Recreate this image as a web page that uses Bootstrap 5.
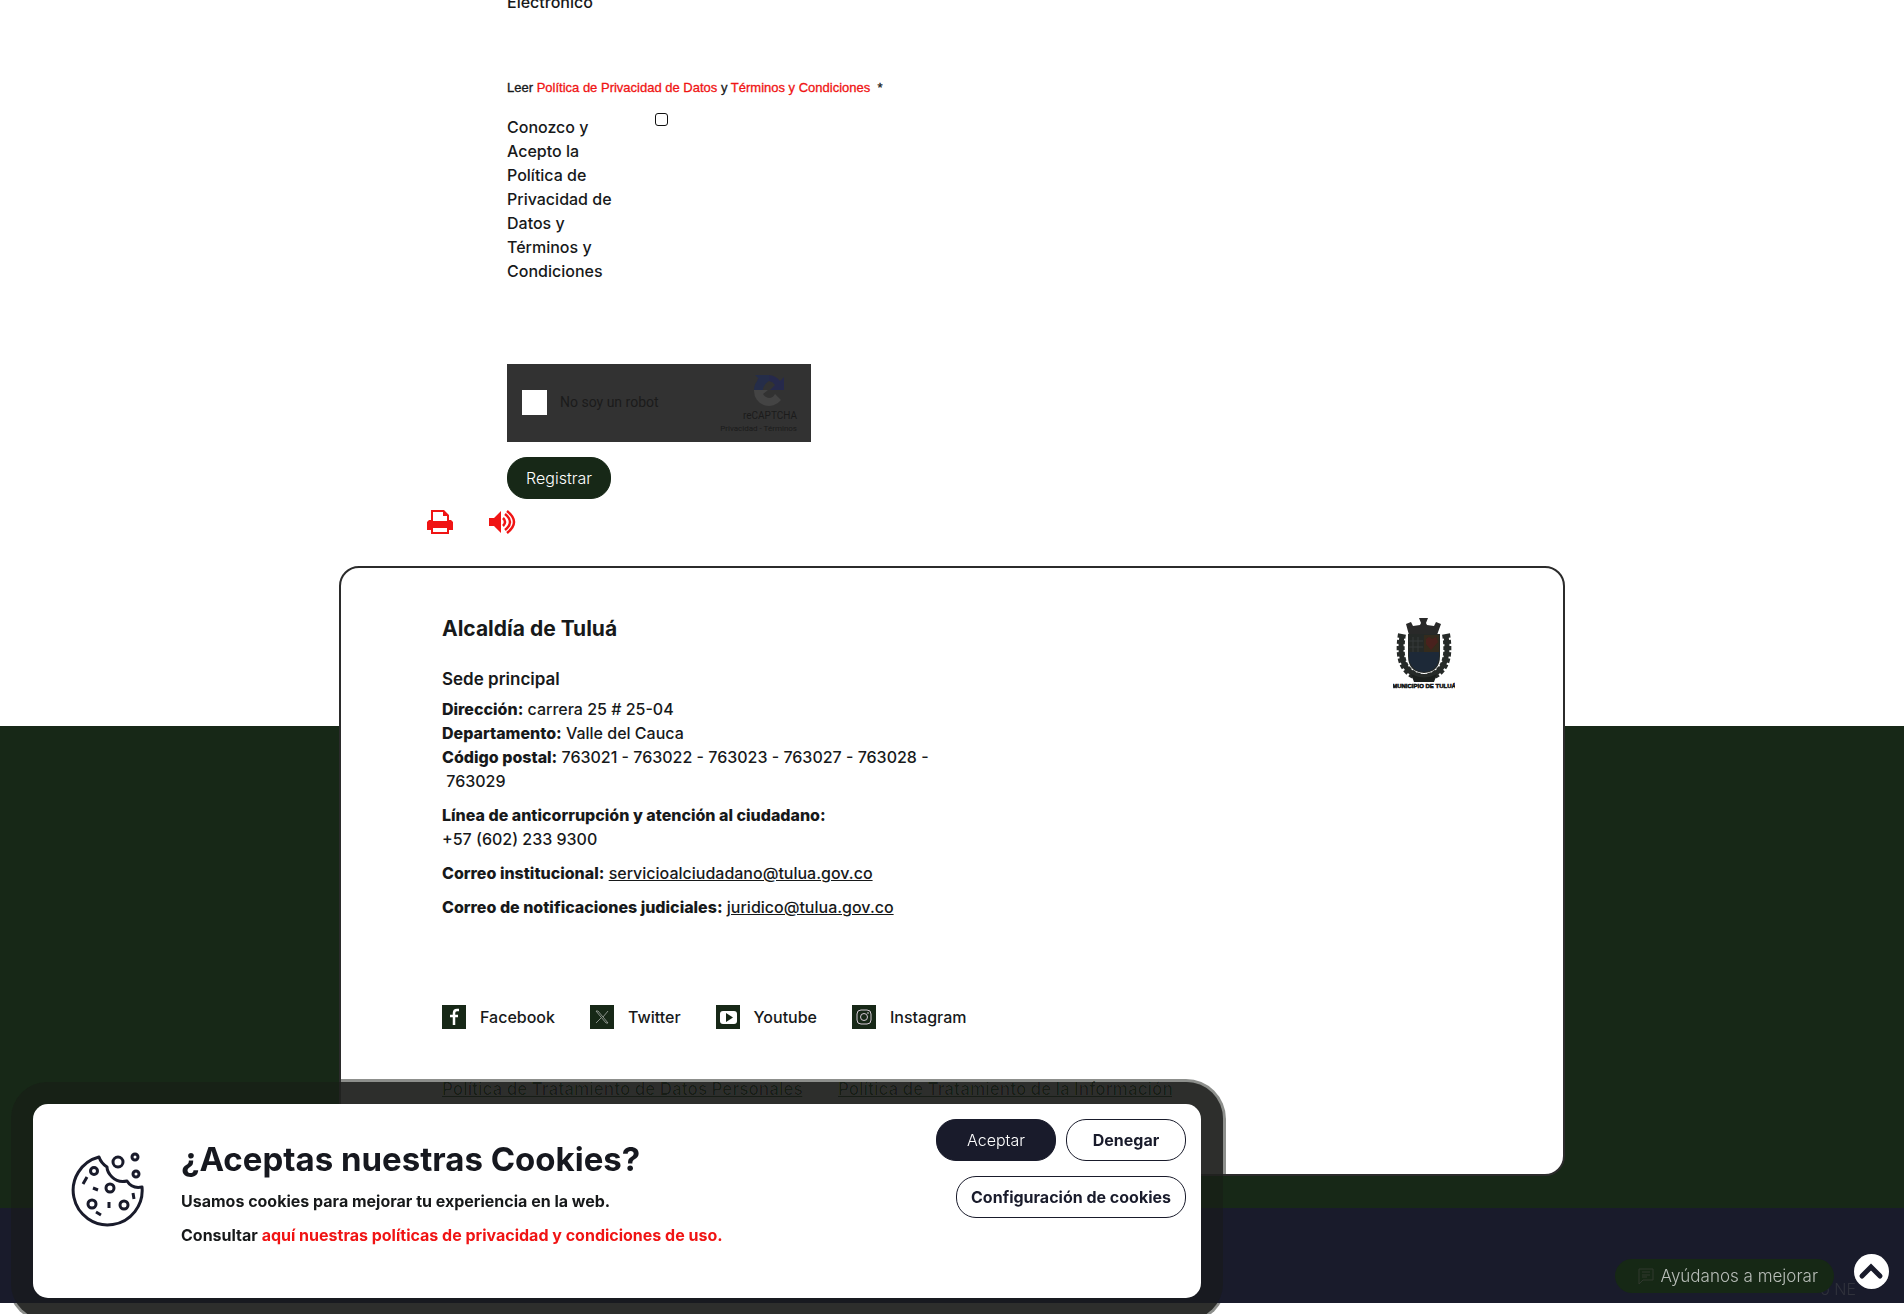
<!DOCTYPE html>
<html lang="es">
<head>
<meta charset="utf-8">
<meta name="viewport" content="width=device-width, initial-scale=1">
<title>Alcaldía de Tuluá</title>
<link href="https://cdn.jsdelivr.net/npm/bootstrap@5.3.0/dist/css/bootstrap.min.css" rel="stylesheet">
<style>
:root { --green:#172817; --navy:#191b2b; --ink:#17191a; --alert:#f01414; }
body { font-family:Inter,"Liberation Sans",sans-serif; font-size:16px; line-height:24px; color:var(--ink); background:#fff; overflow-x:hidden; font-weight:500; }
.wrap { width:100%; max-width:1226px; margin:0 auto; }
.form-zone { padding-left:168px; overflow:hidden; }
.field-label { width:148px; padding-right:32px; }
.first-label { margin-top:-10px; }
.legal { font-family:"Liberation Sans",sans-serif; font-size:13px; line-height:20px; margin-top:64px; -webkit-text-stroke:.3px; }
.legal a, .cookie-box a { color:var(--alert); text-decoration:none; }
.accept-row { margin-top:17px; min-height:249px; }
.accept-row input { appearance:none; width:13px; height:13px; margin:-2px 0 0; border:1px solid #111; border-radius:3px; background:#fff; }
.accept-row input:checked { background:#111; }
.captcha { width:304px; height:78px; background:#323232; font-family:Roboto,sans-serif; color:#1b1b1b; padding:0 14px 2px 15px; font-weight:400; }
.captcha input { appearance:none; width:25px; height:25px; background:#fff; border:0; margin:0; }
.captcha label { font-size:14px; margin-left:13px; }
.captcha-brand { width:80px; font-size:10px; line-height:12px; }
.captcha-brand small { font-size:8px; white-space:nowrap; }
.captcha-brand svg { margin:5px 12px 2px 0; }
.pill { height:42px; border-radius:20px; font-size:16px; line-height:24px; border:1px solid var(--navy); padding:0 14px; background:#fff; color:var(--navy); font-weight:700; }
.pill-green { background:var(--green); border-color:var(--green); color:#fff; font-weight:300; margin-top:15px; width:104px; }
.pill-navy { background:var(--navy); color:#fff; font-weight:300; }
.pill-mid { width:120px; }
.tools { padding:10px 0 0 88px; gap:35px; height:67px; }
.tools a { height:26px; }
.site-footer { background:linear-gradient(#fff 160px,var(--green) 160px); padding-bottom:32px; }
.foot-card { background:#fff; border:2px solid #2b2b2b; border-radius:20px; padding:49px 108px 0 101px; height:610px; }
.foot-card h2 { font-size:21px; line-height:24px; font-weight:700; margin:0 0 26px; }
.foot-card h3 { font-size:17px; line-height:24px; font-weight:600; margin:0 0 6px; }
.foot-card p { margin:0 0 10px; }
.foot-card b { font-weight:800; }
.foot-card a { color:var(--ink); }
.address { width:505px; }
.social { gap:35px; margin-top:76px; height:24px; }
.social a { text-decoration:none; gap:14px; }
.policies { gap:35px; margin-top:48px; font-size:17px; font-weight:600; }
.policies a { color:#172017; }
.navy-bar { background:var(--navy); height:95px; margin-bottom:12px; }
.cookie-halo { position:fixed; left:11px; bottom:-6px; width:calc(100% - 22px); max-width:1212px; height:238px; border-radius:37px; background:#424242; box-shadow:0 0 0 3px #8d8f8c; mix-blend-mode:darken; pointer-events:none; }
.cookie-box { position:fixed; left:33px; bottom:16px; width:calc(100% - 66px); max-width:1168px; height:194px; background:#fff; border-radius:15px; box-shadow:0 0 0 22px rgba(24,25,22,.5); padding:15px 15px 0 38px; z-index:5; font-weight:700; }
.cookie-box h2 { font-size:33px; line-height:40px; font-weight:700; margin:20px 0 10px; color:#16181f; }
.cookie-box p { margin:0 0 10px; }
.cookie-icon { margin:33px 36px 0 0; flex:none; }
.cookie-actions { gap:10px; row-gap:15px; width:260px; }
.help { position:fixed; right:70px; bottom:21px; height:34px; width:219px; border:0; border-radius:17px; background:#162815; color:#b9beb9; font-size:17px; font-weight:300; padding:0 16px 0 22px; z-index:4; }
.lang-hint { position:fixed; right:48px; bottom:13px; color:#30323c; font-weight:300; z-index:3; }
.to-top { position:fixed; right:15px; bottom:25px; width:35px; height:35px; padding:0; border:0; border-radius:50%; background:#fff; z-index:5; }
.to-top svg { display:block; }
</style>
</head>
<body>
<main class="wrap">
  <form class="form-zone" onsubmit="return false">
    <div class="field-label first-label">Electrónico</div>
    <div class="legal">Leer <a href="#">Política de Privacidad de Datos</a> y <a href="#">Términos y Condiciones</a> &nbsp;*</div>
    <div class="accept-row d-flex align-items-start">
      <label class="field-label" for="acepto">Conozco y Acepto la Política de Privacidad de Datos y Términos y Condiciones</label>
      <input type="checkbox" id="acepto">
    </div>
    <div class="captcha d-flex align-items-center">
      <input type="checkbox" id="robot"><label for="robot">No soy un robot</label>
      <div class="captcha-brand ms-auto text-end">
        <svg class="d-block ms-auto" width="32" height="34" viewBox="0 0 32 34"><path d="M31 16V3l-4 4A15 15 0 0 0 4 6l5 5a9 9 0 0 1 7-4 9 9 0 0 1 6 4l-5 5z" fill="#26294b"/><path d="M16 1H2l4 4A15 15 0 0 0 1 16h9q0-5 6-9z" fill="#252d49"/><path d="M1 16v1a15 15 0 0 0 27 9l-6-6q-2 4-6 4a8 8 0 0 1-6-4l5-4z" fill="#444"/></svg>
        reCAPTCHA<br><small>Privacidad - Términos</small>
      </div>
    </div>
    <button class="pill pill-green d-block" type="submit">Registrar</button>
  </form>
  <div class="tools d-flex align-items-start">
    <a href="#" aria-label="Imprimir"><svg class="d-block" width="26" height="26" viewBox="0 0 26 26"><path fill="#f01414" fill-rule="evenodd" d="M4 1h13l5 5v5h2l2 2v8h-4v4H4v-4H0v-8l2-2h2zm2 2v9h14V7h-4V3zm0 16v4h14v-4z"/></svg></a>
    <a href="#" aria-label="Escuchar"><svg class="d-block" width="28" height="26" viewBox="0 0 28 26"><path fill="#f01414" d="M1 9h5l7-7v22l-7-7H1z"/><path d="M15 9q4 4 0 8M17 5q10 8 0 16M19 2q14 11 0 22" fill="none" stroke="#f01414" stroke-width="2.500"/></svg></a>
  </div>
</main>
<footer>
  <div class="site-footer">
    <div class="wrap foot-card">
      <div class="d-flex justify-content-between align-items-start">
        <div class="address">
          <h2>Alcaldía de Tuluá</h2>
          <h3>Sede principal</h3>
          <p class="text-nowrap"><b>Dirección:</b> carrera 25 # 25-04<br><b>Departamento:</b> Valle del Cauca<br><b>Código postal:</b> 763021 - 763022 - 763023 - 763027 - 763028 - <br>&nbsp;763029</p>
          <p><b>Línea de anticorrupción y atención al ciudadano:</b><br>+57 (602) 233 9300</p>
          <p><b>Correo institucional:</b> <a href="#">servicioalciudadano@tulua.gov.co</a></p>
          <p class="text-nowrap"><b>Correo de notificaciones judiciales:</b> <a href="#">juridico@tulua.gov.co</a></p>
        </div>
        <svg width="62" height="74" viewBox="0 0 62 74" role="img" aria-label="Municipio de Tuluá">
          <path d="M16 18l-3-11 5-2 2 4 7-1 1-2-2-5h9l-2 5 1 2 7 1 2-4 5 2-4 11z" fill="#292929"/>
          <path d="M15 17h32v22q0 16-16 17-16-1-16-17z" fill="#252927"/><path d="M16 35h30v5q-1 14-15 15-14-1-15-15z" fill="#1d2938"/>
          <path d="M31 18h15v17H31z" fill="#342b1d"/><path d="M33 22l3-2 3 2 4-2 2 5-7 8-5-6z" fill="#49211d"/>
          <path d="M20 20v15m5-15v15M16 24h14m-14 6h14" stroke="#373b3b"/>
          <g fill="none" stroke="#262a28" stroke-width="5"><path d="M9 18Q3 57 31 60"/><path d="M53 18q6 39-22 42"/></g>
          <g fill="none" stroke="#262a28" stroke-width="8" stroke-dasharray="4 2"><path d="M9 17Q2 57 31 61"/><path d="M53 17q7 40-22 44"/></g>
          <path d="M18 57q13 7 26 0l-3 8H21z" fill="#1b1f1d"/>
          <text x="31" y="71" text-anchor="middle" font-family="Liberation Sans" font-size="6" font-weight="700" fill="#111" stroke="#111" stroke-width=".5">MUNICIPIO DE TULUÁ</text>
        </svg>
      </div>
      <div class="social d-flex align-items-center">
        <a class="d-flex" href="#"><svg width="24" height="24"><path fill="#172817" d="M0 0h24v24H0z"/><path d="M17 5h-2q-3 0-3 3v12M8 11h8" fill="none" stroke="#fff" stroke-width="2.500"/></svg>Facebook</a>
        <a class="d-flex" href="#"><svg width="24" height="24"><path fill="#172817" d="M0 0h24v24H0z"/><path d="M6 6l10 12h2L8 6zM18 6l-5 6m-2 1l-5 5" fill="none" stroke="#a5aaa5" stroke-width=".8"/></svg>Twitter</a>
        <a class="d-flex" href="#"><svg width="24" height="24"><path fill="#172817" d="M0 0h24v24H0z"/><rect x="4" y="6" width="17" height="13" rx="3" fill="#fff"/><path d="M10 8v9l7-4.500z" fill="#172817"/></svg>Youtube</a>
        <a class="d-flex" href="#"><svg width="24" height="24" fill="none" stroke="#d5c9d5"><path fill="#172817" stroke="none" d="M0 0h24v24H0z"/><rect x="5" y="5" width="14" height="14" rx="4"/><circle cx="12" cy="12" r="3.500"/><path d="M16 7v2"/></svg>Instagram</a>
      </div>
      <div class="policies d-flex"><a href="#">Política de Tratamiento de Datos Personales</a><a href="#">Política de Tratamiento de la Información</a></div>
    </div>
  </div>
  <div class="navy-bar"></div>
</footer>

<div class="cookie-halo"></div>
<section class="cookie-box d-flex align-items-start" aria-label="Cookies">
  <svg class="cookie-icon" width="74" height="76" viewBox="0 0 74 76" fill="none" stroke="#191b2b" stroke-width="3">
    <path d="M28 5A34.500 34.500 0 1 0 71 35Q61 37 56 29q-9 2-15-4-5-5-5-10-6-4-8-10z" stroke-linejoin="round"/>
    <circle cx="47" cy="10" r="5"/><circle cx="64" cy="5" r="3"/><circle cx="65" cy="22" r="3"/><circle cx="23" cy="19" r="3.500"/><circle cx="39" cy="36" r="4"/><circle cx="21" cy="52" r="4"/><circle cx="53" cy="53" r="4"/>
    <path d="M16 25l-4 7M22 36l5 2M62 41l1 6M38 50v6M25 60l5 3"/>
  </svg>
  <div class="flex-grow-1">
    <h2>¿Aceptas nuestras Cookies?</h2>
    <p>Usamos cookies para mejorar tu experiencia en la web.</p>
    <p>Consultar <a href="#">aquí nuestras políticas de privacidad y condiciones de uso.</a></p>
  </div>
  <div class="cookie-actions d-flex flex-wrap justify-content-end">
    <button class="pill pill-navy pill-mid" type="button">Aceptar</button>
    <button class="pill pill-mid" type="button">Denegar</button>
    <button class="pill" type="button">Configuración de cookies</button>
  </div>
</section>
<span class="lang-hint">o NE</span>
<button class="help d-flex align-items-center justify-content-between" type="button"><svg width="18" height="18" fill="none" stroke="#30382f"><path d="M2 2h14v11H6l-4 4zM5 5h8M5 8h8M5 10h5"/></svg>Ayúdanos a mejorar</button>
<button class="to-top" type="button" aria-label="Volver arriba"><svg width="35" height="35"><path d="M8 22l9-9 9 9" fill="none" stroke="#191b2b" stroke-width="5" stroke-linecap="round"/></svg></button>
<script src="https://cdn.jsdelivr.net/npm/bootstrap@5.3.0/dist/js/bootstrap.bundle.min.js"></script>
</body>
</html>
